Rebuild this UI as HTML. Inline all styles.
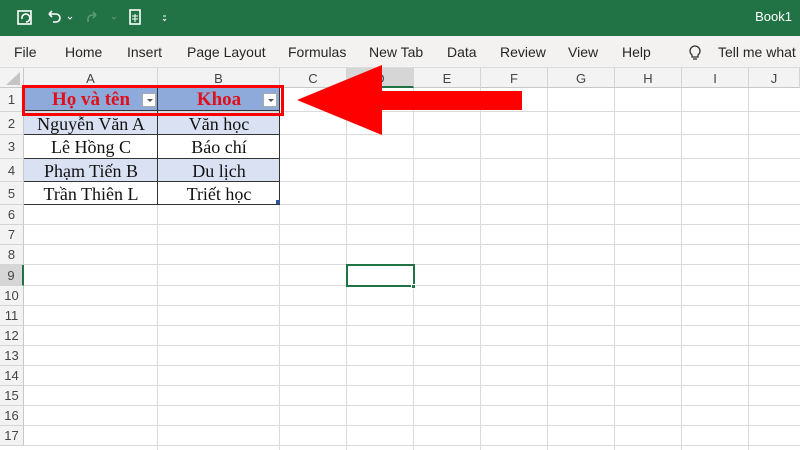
<!DOCTYPE html><html><head><meta charset="utf-8"><style>
*{margin:0;padding:0;box-sizing:border-box}
body{width:800px;height:450px;overflow:hidden;background:#fff;font-family:"Liberation Sans",sans-serif;position:relative}
.a{position:absolute}
.tab{position:absolute;top:44px;font-size:14px;color:#262626}
.ch{position:absolute;top:68px;height:20px;font-size:13px;color:#444;text-align:center;line-height:21px;border-right:1px solid #d4d4d4;background:#f3f3f3;border-bottom:1px solid #c8c8c8}
.rh{position:absolute;left:0;width:24px;font-size:13px;color:#444;text-align:center;background:#f3f3f3;border-right:1px solid #c8c8c8;border-bottom:1px solid #d4d4d4}
.hl{position:absolute;left:24px;width:776px;height:1px;background:#dadada}
.vl{position:absolute;top:88px;height:362px;width:1px;background:#dadada}
.c{position:absolute;font-family:"Liberation Serif",serif;font-size:18px;color:#111;text-align:center;line-height:22px}
.dd{position:absolute;width:14px;height:14px;background:#fff;border:1px solid #aaa;top:93px}
.dd:after{content:"";position:absolute;left:4px;top:5px;border:3px solid transparent;border-top:3px solid #555}
</style></head><body>
<div class="a" style="left:0;top:0;width:800px;height:36px;background:#217346"></div>
<svg class="a" style="left:0px;top:0px" width="180" height="36">
<g fill="none" stroke="#fff" stroke-width="1.6">
<rect x="18" y="11" width="13" height="13"/><path d="M22 19a4 4 0 1 1 4 3"/>
<path d="M49 14h7a4 4 0 0 1 0 8h-3M49 14l3-3M49 14l3 3"/>
<path d="M68 17l2 2 2-2" stroke-width="1"/>
<path d="M88 22v-3a4 4 0 0 1 4-4h4M96 15l-3-3M96 15l-3 3" stroke="#5a9a72"/>
<path d="M112 17l2 2 2-2" stroke-width="1" stroke="#5a9a72"/>
<rect x="130" y="10" width="10" height="14"/><path d="M132 16h6M132 19h6M135 14v8" stroke-width="1"/>
<path d="M163 16h3M163 19l1.5 1.5 1.5-1.5" stroke-width="1"/>
</g></svg>
<div class="a" style="right:8px;top:9px;color:#fff;font-size:13px">Book1</div>
<div class="a" style="left:0;top:36px;width:800px;height:32px;background:#f3f2f1;border-bottom:1px solid #dcdcdc"></div>
<div class="tab" style="left:14px">File</div><div class="tab" style="left:65px">Home</div><div class="tab" style="left:127px">Insert</div><div class="tab" style="left:187px">Page Layout</div><div class="tab" style="left:288px">Formulas</div><div class="tab" style="left:369px">New Tab</div><div class="tab" style="left:447px">Data</div><div class="tab" style="left:500px">Review</div><div class="tab" style="left:568px">View</div><div class="tab" style="left:622px">Help</div>
<svg class="a" style="left:688px;top:43px" width="14" height="18"><path d="M4 12a5 5 0 1 1 6 0v2H4zM5 16h4" fill="none" stroke="#333" stroke-width="1.3"/></svg>
<div class="tab" style="left:718px">Tell me what</div>
<div class="a" style="left:0;top:68px;width:24px;height:20px;background:#f3f3f3;border-right:1px solid #c8c8c8;border-bottom:1px solid #c8c8c8"></div>
<div class="a" style="left:6px;top:72px;width:0;height:0;border-left:14px solid transparent;border-bottom:13px solid #c4c4c4"></div>
<div class="ch" style="left:24px;width:134px">A</div><div class="ch" style="left:158px;width:122px">B</div><div class="ch" style="left:280px;width:67px">C</div><div class="ch" style="left:347px;width:67px;background:#d6d6d6;border-bottom:2px solid #217346">D</div><div class="ch" style="left:414px;width:67px">E</div><div class="ch" style="left:481px;width:67px">F</div><div class="ch" style="left:548px;width:67px">G</div><div class="ch" style="left:615px;width:67px">H</div><div class="ch" style="left:682px;width:67px">I</div><div class="ch" style="left:749px;width:51px">J</div>
<div class="rh" style="top:88px;height:24px;line-height:24px">1</div><div class="rh" style="top:112px;height:23px;line-height:23px">2</div><div class="rh" style="top:135px;height:24px;line-height:24px">3</div><div class="rh" style="top:159px;height:23px;line-height:23px">4</div><div class="rh" style="top:182px;height:23px;line-height:23px">5</div>
<div class="rh" style="top:205px;height:20px;line-height:20px">6</div><div class="rh" style="top:225px;height:20px;line-height:20px">7</div><div class="rh" style="top:245px;height:20px;line-height:20px">8</div><div class="rh" style="top:265px;height:21px;line-height:21px;background:#d6d6d6;border-right:2px solid #217346">9</div><div class="rh" style="top:286px;height:20px;line-height:20px">10</div><div class="rh" style="top:306px;height:20px;line-height:20px">11</div><div class="rh" style="top:326px;height:20px;line-height:20px">12</div><div class="rh" style="top:346px;height:20px;line-height:20px">13</div><div class="rh" style="top:366px;height:20px;line-height:20px">14</div><div class="rh" style="top:386px;height:20px;line-height:20px">15</div><div class="rh" style="top:406px;height:20px;line-height:20px">16</div><div class="rh" style="top:426px;height:20px;line-height:20px">17</div>
<div class="hl" style="top:111px"></div><div class="hl" style="top:134px"></div><div class="hl" style="top:158px"></div><div class="hl" style="top:181px"></div><div class="hl" style="top:204px"></div><div class="hl" style="top:224px"></div><div class="hl" style="top:244px"></div><div class="hl" style="top:264px"></div><div class="hl" style="top:285px"></div><div class="hl" style="top:305px"></div><div class="hl" style="top:325px"></div><div class="hl" style="top:345px"></div><div class="hl" style="top:365px"></div><div class="hl" style="top:385px"></div><div class="hl" style="top:405px"></div><div class="hl" style="top:425px"></div><div class="hl" style="top:445px"></div>
<div class="vl" style="left:157px"></div><div class="vl" style="left:279px"></div><div class="vl" style="left:346px"></div><div class="vl" style="left:413px"></div><div class="vl" style="left:480px"></div><div class="vl" style="left:547px"></div><div class="vl" style="left:614px"></div><div class="vl" style="left:681px"></div><div class="vl" style="left:748px"></div>
<div class="a" style="left:24px;top:88px;width:256px;height:23px;background:#8eaadb;border-bottom:1px solid #333"></div>
<div class="a" style="left:24px;top:112px;width:256px;height:23px;background:#d9e1f2"></div>
<div class="a" style="left:24px;top:159px;width:256px;height:23px;background:#d9e1f2"></div>
<div class="a" style="left:24px;top:134px;width:256px;height:1px;background:#333"></div><div class="a" style="left:24px;top:158px;width:256px;height:1px;background:#333"></div><div class="a" style="left:24px;top:181px;width:256px;height:1px;background:#333"></div><div class="a" style="left:24px;top:204px;width:256px;height:1px;background:#333"></div>
<div class="a" style="left:157px;top:88px;width:1px;height:117px;background:#333"></div><div class="a" style="left:279px;top:88px;width:1px;height:117px;background:#333"></div>
<div class="a" style="left:276px;top:200px;width:4px;height:4px;background:#2f5597"></div>
<div class="c" style="left:30px;top:89px;width:122px;color:#e0101a;font-weight:bold;font-size:19px">Họ và tên</div><div class="dd" style="left:142px"></div>
<div class="c" style="left:158px;top:89px;width:122px;color:#e0101a;font-weight:bold;font-size:19px">Khoa</div><div class="dd" style="left:263px"></div>
<div class="c" style="left:24px;top:113px;width:134px">Nguyễn Văn A</div><div class="c" style="left:158px;top:113px;width:122px">Văn học</div>
<div class="c" style="left:24px;top:136px;width:134px">Lê Hồng C</div><div class="c" style="left:158px;top:136px;width:122px">Báo chí</div>
<div class="c" style="left:24px;top:160px;width:134px">Phạm Tiến B</div><div class="c" style="left:158px;top:160px;width:122px">Du lịch</div>
<div class="c" style="left:24px;top:183px;width:134px">Trần Thiên L</div><div class="c" style="left:158px;top:183px;width:122px">Triết học</div>
<div class="a" style="left:22px;top:85px;width:262px;height:31px;border:3px solid #ff0000"></div>
<svg class="a" style="left:0px;top:0px" width="800" height="450"><polygon points="297,100 382,65 382,91 522,91 522,110 382,110 382,135" fill="#ff0000"/></svg>
<div class="a" style="left:346px;top:264px;width:69px;height:23px;border:2px solid #217346"></div>
<div class="a" style="left:411px;top:284px;width:5px;height:5px;background:#217346;border:1px solid #fff"></div>
</body></html>
